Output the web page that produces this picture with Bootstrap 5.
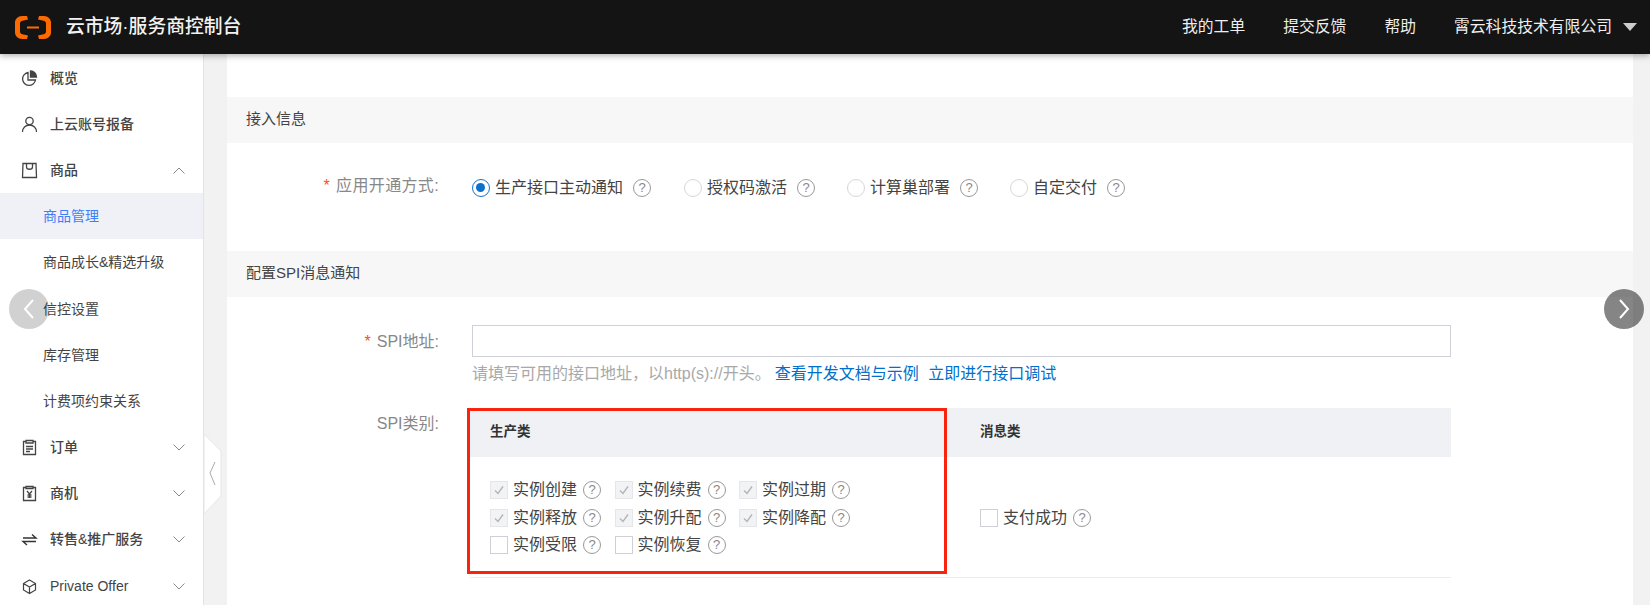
<!DOCTYPE html>
<html lang="zh-CN">
<head>
<meta charset="utf-8">
<title>云市场·服务商控制台</title>
<link href="https://cdn.jsdelivr.net/npm/bootstrap@5.3.0/dist/css/bootstrap.min.css" rel="stylesheet">
<style>
html,body{height:605px;overflow:hidden}
body{font-family:"Liberation Sans","Noto Sans CJK SC",sans-serif;background:#f2f2f3;color:#444;font-size:16px}
.topbar{height:54px;background:#141414;box-shadow:0 2px 6px rgba(0,0,0,.3);color:#eee;padding:0 13px 0 15px;z-index:5;position:relative}
.brand-name{font-size:18.800px;font-weight:500;color:#f2f2f2;margin-left:15px}
.top-links{gap:38px;font-size:15.800px;line-height:1}
.top-drop{width:0;height:0;border-left:7px solid transparent;border-right:7px solid transparent;border-top:8px solid #ccc;margin-left:3px}
.shell{height:551px}
.side{width:204px;flex:none;background:#fff;border-right:1px solid #e3e3e5;overflow:hidden;font-size:14px;color:#444}
.side-row{height:46.200px;padding:2px 18px 0 21px;flex:none}
.side-row svg.mi{width:17px;height:17px;margin-right:12px;flex:none}
.side-row .side-lbl{flex:1;font-weight:500}
.side-sub{height:46.200px;padding:2px 0 0 43px;flex:none;color:#444}
.side-sub.on{background:#f0f1f6;color:#3f7ff5}
.workspace{flex:1;position:relative;padding:0 17px 0 23px;min-width:0}
.sheet{background:#fff;height:100%;padding-top:43px;overflow:hidden}
.sec-head{height:46px;background:#f7f7f7;padding-left:19px;font-size:15px;color:#444;padding-bottom:1px}
.radio-sec{height:108px;padding-left:245px;padding-bottom:18px}
.fld-lbl{position:absolute;width:212px;text-align:right;color:#888;font-size:16px;line-height:1.2;left:0;white-space:nowrap}
.fld-wide{letter-spacing:.35px}
.req{color:#f4512c;margin-right:6px}
.ropt{width:18px;height:18px;border-radius:50%;border:1px solid #d6d6d9;background:#fff;flex:none;margin-right:5px}
.ropt.sel{border:1.500px solid #1473cf;position:relative}
.ropt.sel::after{content:"";position:absolute;left:3px;top:3px;width:9px;height:9px;border-radius:50%;background:#0f70cc}
.opt-text{color:#444;font-size:16px;line-height:1;white-space:nowrap}
.qmark{width:18px;height:18px;border-radius:50%;border:1.500px solid #999;color:#888;font-size:13px;line-height:15px;text-align:center;flex:none;margin-left:10px;font-family:"Liberation Sans",sans-serif}
.radio-item{margin-right:32px}
.radio-item:first-of-type{margin-right:33px}
.form-pane{padding:28px 0 0 245px;position:relative}
.url-input{height:32px;border:1px solid #d0d0d8;border-radius:0;width:979px;background:#fff}
.hint{font-size:16px;color:#a8a8a8;margin-top:7px;line-height:20px;white-space:nowrap;height:20px}
.hint a{color:#0070cc;text-decoration:none;margin-right:5px}
.hint a.first-link{margin-left:4px}
.tbl-wrap{position:relative;width:981px;margin:24px 0 0 -2px}
.spi-tbl{margin:0;table-layout:fixed;width:100%}
.spi-tbl th{height:49px;background:#f0f1f5;border:0;font-size:13.500px;font-weight:700;color:#333;padding:0 0 0 20px;vertical-align:middle}
.spi-tbl td{height:120px;padding:2px 0 0 20px;border-bottom:1px solid #ededed;vertical-align:middle}
.red-mark{position:absolute;left:-3px;top:0;width:480px;height:166px;border:3px solid #f8240d;pointer-events:none}
.chk-grid{display:grid;grid-template-columns:124.500px 124.500px auto;row-gap:9.400px}
.chk-item{display:flex;align-items:center;height:18px}
.chk-box{width:18px;height:18px;flex:none;margin:0 5px 0 0;border:1px solid #cfcfd8;border-radius:0;background:#fff;appearance:none;display:block}
.chk-box:checked{background:#f2f3f5 url("data:image/svg+xml,%3Csvg xmlns='http://www.w3.org/2000/svg' viewBox='0 0 18 18'%3E%3Cpath d='M5 9.500l3 3 5-7' fill='none' stroke='%23b5b5b5' stroke-width='1.400'/%3E%3C/svg%3E") center/18px no-repeat;border-color:#e6e6ea}
.chk-item .qmark{margin-left:6px}
.flip{position:absolute;width:40px;height:40px;border-radius:50%;top:235px;display:flex;align-items:center;justify-content:center;z-index:6}
.flip-l{left:9px;background:rgba(0,0,0,.18)}
.flip-r{left:1604px;background:rgba(0,0,0,.48)}
.edge-tab{position:absolute;left:204px;top:380px;z-index:3}
.stage{position:relative}
</style>
</head>
<body>
<header class="topbar d-flex align-items-center justify-content-between">
  <div class="d-flex align-items-center">
    <svg width="36" height="23" viewBox="0 0 36 23" fill="none" aria-label="logo">
      <path d="M12 0H7C3 0 0 3 0 6.500V16.500C0 20 3 23 7 23H12L13 19.500L7.500 18.300C6 18 5 17 5 15.500V7.500C5 6 6 5 7.500 4.700L13 3.500z" fill="#ff6a00"/>
      <path d="M24 0H29C33 0 36 3 36 6.500V16.500C36 20 33 23 29 23H24L23 19.500L28.500 18.300C30 18 31 17 31 15.500V7.500C31 6 30 5 28.500 4.700L23 3.500z" fill="#ff6a00"/>
      <rect x="12" y="10.500" width="12" height="2" fill="#ff6a00"/>
    </svg>
    <span class="brand-name">云市场·服务商控制台</span>
  </div>
  <div class="d-flex align-items-center top-links">
    <span>我的工单</span><span>提交反馈</span><span>帮助</span>
    <span class="d-flex align-items-center gap-2">霄云科技技术有限公司<i class="top-drop"></i></span>
  </div>
</header>
<div class="d-flex shell stage">
  <nav class="side d-flex flex-column">
    <div class="side-row d-flex align-items-center"><svg class="mi" viewBox="0 0 17 17" fill="none" stroke="#444" stroke-width="1.300"><path d="M7 2.500a6.500 6.500 0 1 0 7.500 7.500H7z"/><path d="M9.500 1v6h6a6 6 0 0 0-6-6z" fill="#444"/></svg><span class="side-lbl">概览</span></div>
    <div class="side-row d-flex align-items-center"><svg class="mi" viewBox="0 0 17 17" fill="none" stroke="#444" stroke-width="1.300"><circle cx="8.500" cy="5" r="3.700"/><path d="M1.500 16c0-4 3-7 7-7s7 3 7 7"/></svg><span class="side-lbl">上云账号报备</span></div>
    <div class="side-row d-flex align-items-center"><svg class="mi" viewBox="0 0 17 17" fill="none" stroke="#444" stroke-width="1.300"><path d="M2 1.500h13l.5 14H1.500z"/><path d="M5.500 2v3c0 3 6 3 6 0V2"/></svg><span class="side-lbl">商品</span><svg width="12" height="7" viewBox="0 0 12 7" fill="none" stroke="#888"><path d="M.5 6.500L6 1l5.500 5.500"/></svg></div>
    <div class="side-sub on d-flex align-items-center">商品管理</div>
    <div class="side-sub d-flex align-items-center">商品成长&amp;精选升级</div>
    <div class="side-sub d-flex align-items-center">信控设置</div>
    <div class="side-sub d-flex align-items-center">库存管理</div>
    <div class="side-sub d-flex align-items-center">计费项约束关系</div>
    <div class="side-row d-flex align-items-center"><svg class="mi" viewBox="0 0 17 17" fill="none" stroke="#444" stroke-width="1.300"><path d="M5 2.500H2.500v13h12v-13H12"/><path d="M5 1.500h7v2.500H5zM5 7.500h7M5 10h7M5 12.500h4"/></svg><span class="side-lbl">订单</span><svg width="12" height="7" viewBox="0 0 12 7" fill="none" stroke="#888"><path d="M.5.500L6 6l5.500-5.500"/></svg></div>
    <div class="side-row d-flex align-items-center"><svg class="mi" viewBox="0 0 17 17" fill="none" stroke="#444" stroke-width="1.300"><path d="M5 2.500H2.500v13h12v-13H12"/><path d="M5 1.500h7v2H5zM6 6l2.500 3L11 6M8.500 9v4M6.500 10h4M6.500 12h4"/></svg><span class="side-lbl">商机</span><svg width="12" height="7" viewBox="0 0 12 7" fill="none" stroke="#888"><path d="M.5.500L6 6l5.500-5.500"/></svg></div>
    <div class="side-row d-flex align-items-center"><svg class="mi" viewBox="0 0 17 17" fill="none" stroke="#333" stroke-width="1.400"><path d="M2 7h13L11 3.500M15 10.500H2L6 14"/></svg><span class="side-lbl">转售&amp;推广服务</span><svg width="12" height="7" viewBox="0 0 12 7" fill="none" stroke="#888"><path d="M.5.500L6 6l5.500-5.500"/></svg></div>
    <div class="side-row d-flex align-items-center"><svg class="mi" viewBox="0 0 17 17" fill="none" stroke="#444" stroke-width="1.200"><path d="M8.500 2l6 3.500v6.500l-6 3.500-6-3.500V5.500zM2.500 5.500l6 3.500 6-3.500M8.500 9v6.500"/></svg><span class="side-lbl">Private Offer</span><svg width="12" height="7" viewBox="0 0 12 7" fill="none" stroke="#888"><path d="M.5.500L6 6l5.500-5.500"/></svg></div>
  </nav>
  <main class="workspace">
    <div class="sheet">
      <div class="sec-head d-flex align-items-center">接入信息</div>
      <div class="radio-sec d-flex align-items-center position-relative">
        <span class="fld-lbl fld-wide" style="top:33px"><span class="req">*</span>应用开通方式:</span>
        <div class="radio-item d-flex align-items-center"><span class="ropt sel"></span><span class="opt-text">生产接口主动通知</span><span class="qmark">?</span></div>
        <div class="radio-item d-flex align-items-center"><span class="ropt"></span><span class="opt-text">授权码激活</span><span class="qmark">?</span></div>
        <div class="radio-item d-flex align-items-center"><span class="ropt"></span><span class="opt-text">计算巢部署</span><span class="qmark">?</span></div>
        <div class="radio-item d-flex align-items-center"><span class="ropt"></span><span class="opt-text">自定交付</span><span class="qmark">?</span></div>
      </div>
      <div class="sec-head d-flex align-items-center">配置SPI消息通知</div>
      <div class="form-pane">
        <span class="fld-lbl" style="top:35px"><span class="req">*</span>SPI地址:</span>
        <input class="form-control url-input" type="text" aria-label="SPI地址">
        <div class="hint">请填写可用的接口地址，以http(s)://开头。<a class="first-link" href="#">查看开发文档与示例</a> <a href="#">立即进行接口调试</a></div>
        <span class="fld-lbl" style="top:117px">SPI类别:</span>
        <div class="tbl-wrap">
          <table class="table spi-tbl">
            <colgroup><col style="width:490px"><col></colgroup>
            <thead><tr><th>生产类</th><th>消息类</th></tr></thead>
            <tbody><tr>
              <td>
                <div class="chk-grid">
                  <label class="chk-item"><input type="checkbox" class="chk-box" checked disabled><span class="opt-text">实例创建</span><span class="qmark">?</span></label>
                  <label class="chk-item"><input type="checkbox" class="chk-box" checked disabled><span class="opt-text">实例续费</span><span class="qmark">?</span></label>
                  <label class="chk-item"><input type="checkbox" class="chk-box" checked disabled><span class="opt-text">实例过期</span><span class="qmark">?</span></label>
                  <label class="chk-item"><input type="checkbox" class="chk-box" checked disabled><span class="opt-text">实例释放</span><span class="qmark">?</span></label>
                  <label class="chk-item"><input type="checkbox" class="chk-box" checked disabled><span class="opt-text">实例升配</span><span class="qmark">?</span></label>
                  <label class="chk-item"><input type="checkbox" class="chk-box" checked disabled><span class="opt-text">实例降配</span><span class="qmark">?</span></label>
                  <label class="chk-item"><input type="checkbox" class="chk-box"><span class="opt-text">实例受限</span><span class="qmark">?</span></label>
                  <label class="chk-item"><input type="checkbox" class="chk-box"><span class="opt-text">实例恢复</span><span class="qmark">?</span></label>
                </div>
              </td>
              <td><label class="chk-item"><input type="checkbox" class="chk-box"><span class="opt-text">支付成功</span><span class="qmark">?</span></label></td>
            </tr></tbody>
          </table>
          <div class="red-mark"></div>
        </div>
      </div>
    </div>
  </main>
  <svg class="edge-tab" width="18" height="80" viewBox="0 0 18 80"><path d="M0 0L17 17V62L0 80z" fill="#fff" stroke="#e6e6e8"/><path d="M11 28L6 39l5 12" fill="none" stroke="#aaa"/></svg>
  <div class="flip flip-l"><svg width="12" height="24" viewBox="0 0 12 24" fill="none" stroke="#fff" stroke-width="2"><path d="M10 3L2 12l8 9"/></svg></div>
  <div class="flip flip-r"><svg width="12" height="24" viewBox="0 0 12 24" fill="none" stroke="#fff" stroke-width="2"><path d="M2 3l8 9-8 9"/></svg></div>
</div>
<script src="https://cdn.jsdelivr.net/npm/bootstrap@5.3.0/dist/js/bootstrap.bundle.min.js"></script>
</body>
</html>
